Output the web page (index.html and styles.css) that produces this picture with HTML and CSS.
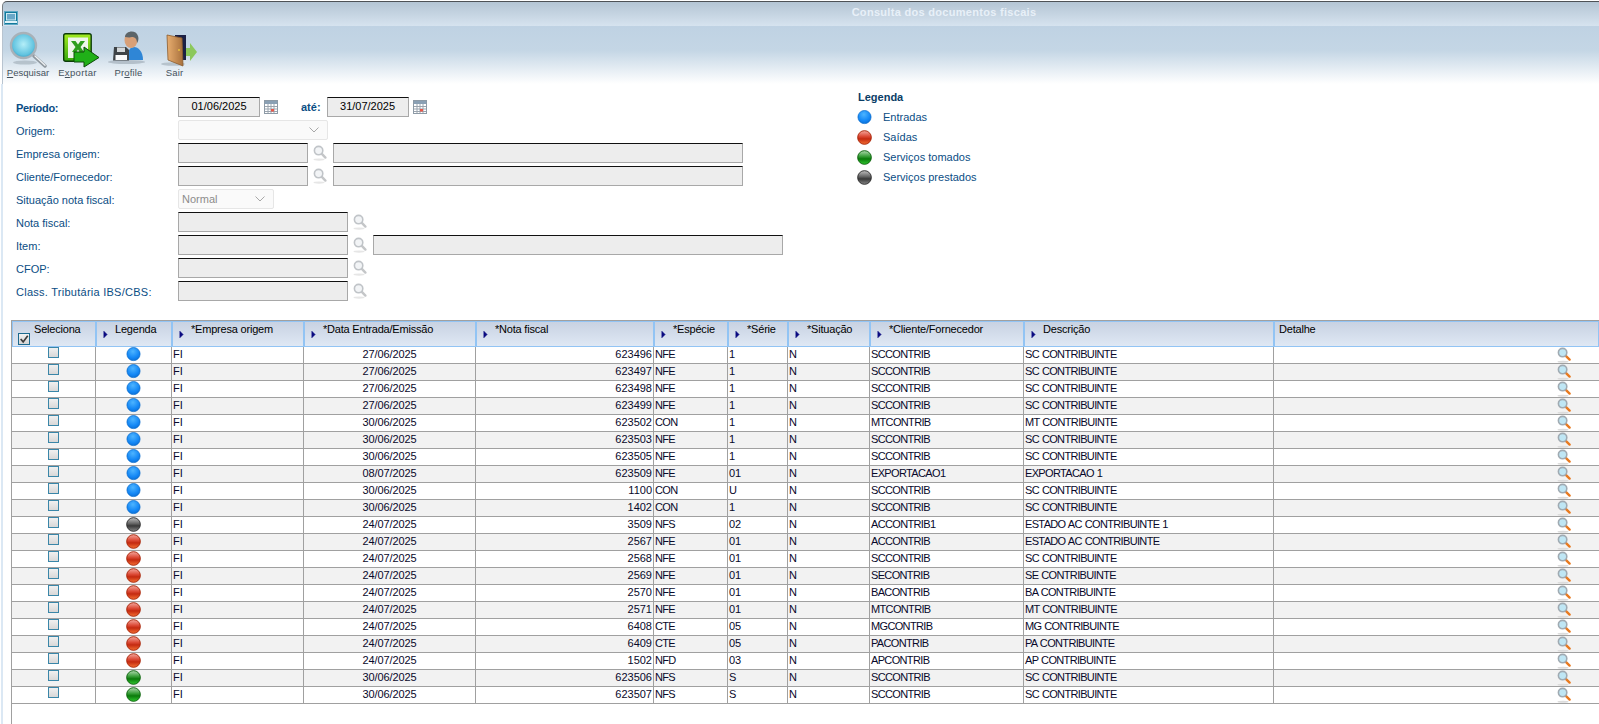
FILE: index.html
```html
<!DOCTYPE html>
<html lang="pt-BR">
<head>
<meta charset="utf-8">
<title>Consulta dos documentos fiscais</title>
<link rel="stylesheet" href="styles.css">
</head>
<body>
<svg class="defs" width="0" height="0" aria-hidden="true">
  <defs>
    <radialGradient id="gBlue" cx=".45" cy=".3" r=".8"><stop offset="0" stop-color="#4db4ff"/><stop offset=".6" stop-color="#1488f6"/><stop offset="1" stop-color="#0a68cc"/></radialGradient>
    <linearGradient id="gRed" x1="0" y1="0" x2="0" y2="1"><stop offset="0" stop-color="#f4a89e"/><stop offset=".42" stop-color="#dc4a36"/><stop offset=".6" stop-color="#c42a10"/><stop offset="1" stop-color="#f47034"/></linearGradient>
    <linearGradient id="gGreen" x1="0" y1="0" x2="0" y2="1"><stop offset="0" stop-color="#b0d8b0"/><stop offset=".42" stop-color="#389e38"/><stop offset=".6" stop-color="#0a7a0a"/><stop offset="1" stop-color="#30c830"/></linearGradient>
    <linearGradient id="gGray" x1="0" y1="0" x2="0" y2="1"><stop offset="0" stop-color="#c0c0c0"/><stop offset=".42" stop-color="#686868"/><stop offset=".6" stop-color="#383838"/><stop offset="1" stop-color="#888888"/></linearGradient>
    <symbol id="dotBlue" viewBox="0 0 16 16"><circle cx="8" cy="7.500" r="7" fill="url(#gBlue)" stroke="#0a6ccc" stroke-width=".8"/></symbol>
    <symbol id="dotRed" viewBox="0 0 16 16"><circle cx="8" cy="8" r="7.300" fill="url(#gRed)" stroke="#a82408" stroke-width="1"/></symbol>
    <symbol id="dotGreen" viewBox="0 0 16 16"><circle cx="8" cy="8" r="7.300" fill="url(#gGreen)" stroke="#0a620a" stroke-width="1"/></symbol>
    <symbol id="dotGray" viewBox="0 0 16 16"><circle cx="8" cy="8" r="7.300" fill="url(#gGray)" stroke="#2c2c2c" stroke-width="1"/></symbol>
    <symbol id="lupaGray" viewBox="0 0 14 16"><ellipse cx="6" cy="14.600" rx="5.500" ry="1.100" fill="#e6e6e6"/><path d="M8.600 8.600l3.800 4" stroke="#c4c6c8" stroke-width="2.400" stroke-linecap="round"/><circle cx="5.600" cy="5.600" r="4.200" fill="#f2f4f6" stroke="#c0c4c8" stroke-width="1.600"/></symbol>
    <symbol id="lupaOrange" viewBox="0 0 14 16"><ellipse cx="6" cy="14.800" rx="5.500" ry="1" fill="#dcdcdc"/><path d="M8.800 8.800l3.800 3.800" stroke="#e87a20" stroke-width="2.400" stroke-linecap="round"/><circle cx="5.600" cy="5.600" r="4.200" fill="#bfe6f4" stroke="#a0aab2" stroke-width="1.600"/></symbol>
    <symbol id="cal" viewBox="0 0 14 14"><rect x=".5" y=".5" width="13" height="13" fill="#fff" stroke="#8d9aa6"/><rect x="1" y="1" width="12" height="3" fill="#8aa0b4"/><path d="M1 6.500h12M1 9h12M1 11.500h12M4 4v9M7 4v9M10 4v9" stroke="#9aa4ae" stroke-width="1"/><rect x="7" y="9" width="3" height="2.500" fill="#e8584a"/></symbol>
    <symbol id="sort" viewBox="0 0 6 10"><path d="M1 1l4 4-4 4z" fill="#0a0a80" stroke="#0a0a80" stroke-width=".6"/></symbol>
  </defs>
</svg>
<div class="window">
  <header class="titlebar">
    <span class="appicon"><svg width="12" height="10" viewBox="0 0 12 10"><rect x="1.500" y=".5" width="9" height="6.500" fill="#6aa8c8" stroke="#cfeaf2"/><rect x="0" y="8" width="12" height="2" fill="#dff2f8"/></svg></span>
    <span class="wintitle">Consulta dos documentos fiscais</span>
  </header>
  <nav class="toolbar">
    <div class="tool tool-pesq">
      <svg width="44" height="38" viewBox="0 0 44 38"><defs><radialGradient id="lens" cx=".5" cy=".45" r=".6"><stop offset="0" stop-color="#b4eef8"/><stop offset=".7" stop-color="#62c4e0"/><stop offset="1" stop-color="#2f92ba"/></radialGradient></defs><ellipse cx="19" cy="32.500" rx="12" ry="2" fill="#a7b3bd" opacity=".7"/><path d="M28 26l11 10" stroke="#8f989f" stroke-width="3.400" stroke-linecap="round"/><path d="M29 26l10 9.300" stroke="#eef1f3" stroke-width="1.300" stroke-linecap="round"/><circle cx="17.500" cy="15.500" r="12.500" fill="url(#lens)" stroke="#a8b1b8" stroke-width="2.400"/></svg>
      <span class="toolname"><u>P</u>esquisar</span>
    </div>
    <div class="tool tool-exp">
      <svg width="55" height="38" viewBox="0 0 55 38"><defs><linearGradient id="xl" x1="0" y1="0" x2="0" y2="1"><stop offset="0" stop-color="#a4ec20"/><stop offset="1" stop-color="#36a80c"/></linearGradient></defs><rect x="13.700" y="3.700" width="27.500" height="27.500" rx="2" fill="url(#xl)" stroke="#0c3c08" stroke-width="1.400"/><rect x="18" y="7.500" width="20" height="20.500" fill="#eef6ea"/><path d="M21 11h4.500l2.500 3.500 2.500-3.500H35l-4.500 6 3.500 5h-4.500L28 19.500 26.500 22H22l3.500-5z" fill="#2e9e1c"/><path d="M34 17l15 10.500L34 37v-5H24V22h10z" fill="#20b018" stroke="#0c4a08" stroke-width="1"/></svg>
      <span class="toolname">E<u>x</u>portar</span>
    </div>
    <div class="tool tool-prof">
      <svg width="47" height="38" viewBox="0 0 47 38"><ellipse cx="21.500" cy="32" rx="18.500" ry="2" fill="#a7b3bd" opacity=".75"/><path d="M22 30c0-9 3-13 7-13s9 4 9 13z" fill="#2f86d6"/><ellipse cx="26" cy="10" rx="6.500" ry="8" fill="#d8a078"/><path d="M20 7c0-6 11-8 13-1 1 3 0 6-1 7 0-4-2-6-5-6-3 1-5 0-7 0z" fill="#5c6468"/><path d="M9 17h12l3 3v10.500H8z" fill="#3e4346"/><rect x="12" y="17.500" width="8" height="4.500" fill="#d4d8da"/><rect x="10.500" y="25" width="11.500" height="5" fill="#fafafa"/></svg>
      <span class="toolname">Pr<u>o</u>file</span>
    </div>
    <div class="tool tool-sair">
      <svg width="45" height="38" viewBox="0 0 45 38"><defs><linearGradient id="door" x1="0" y1="0" x2="1" y2="0"><stop offset="0" stop-color="#e8ae70"/><stop offset="1" stop-color="#a8703c"/></linearGradient></defs><ellipse cx="21" cy="34" rx="12" ry="1.800" fill="#a7b3bd" opacity=".7"/><rect x="23" y="5" width="11" height="25" fill="#1c2044"/><path d="M15 5l15 3 1 28-15-6z" fill="url(#door)" stroke="#8a5a2c" stroke-width=".8"/><circle cx="27" cy="20" r="1" fill="#e8c040"/><path d="M34 18h4v-5l7 9-7 9v-5h-4z" fill="#8cc85c"/></svg>
      <span class="toolname">Sair</span>
    </div>
  </nav>
  <main class="content">
    <section class="filters">
      <form class="form">
        <div class="row">
          <label class="lbl lbl-strong">Período:</label>
          <span class="field w-date">01/06/2025</span>
          <svg class="cal" width="14" height="14"><use href="#cal"/></svg>
          <label class="lbl-strong ate">até:</label>
          <span class="field w-date">31/07/2025</span>
          <svg class="cal" width="14" height="14"><use href="#cal"/></svg>
        </div>
        <div class="row">
          <label class="lbl">Origem:</label>
          <span class="select w-origem"><svg class="chev" width="10" height="6" viewBox="0 0 10 6"><path d="M.5.5L5 5 9.500.5" fill="none" stroke="#a8a8a8"/></svg></span>
        </div>
        <div class="row">
          <label class="lbl">Empresa origem:</label>
          <span class="field w-code"></span>
          <svg class="lupa" width="14" height="16"><use href="#lupaGray"/></svg>
          <span class="field w-desc"></span>
        </div>
        <div class="row">
          <label class="lbl">Cliente/Fornecedor:</label>
          <span class="field w-code"></span>
          <svg class="lupa" width="14" height="16"><use href="#lupaGray"/></svg>
          <span class="field w-desc"></span>
        </div>
        <div class="row">
          <label class="lbl">Situação nota fiscal:</label>
          <span class="select w-sit">Normal<svg class="chev" width="10" height="6" viewBox="0 0 10 6"><path d="M.5.5L5 5 9.500.5" fill="none" stroke="#a8a8a8"/></svg></span>
        </div>
        <div class="row">
          <label class="lbl">Nota fiscal:</label>
          <span class="field w-wide"></span>
          <svg class="lupa" width="14" height="16"><use href="#lupaGray"/></svg>
        </div>
        <div class="row">
          <label class="lbl">Item:</label>
          <span class="field w-wide"></span>
          <svg class="lupa" width="14" height="16"><use href="#lupaGray"/></svg>
          <span class="field w-desc"></span>
        </div>
        <div class="row">
          <label class="lbl">CFOP:</label>
          <span class="field w-wide"></span>
          <svg class="lupa" width="14" height="16"><use href="#lupaGray"/></svg>
        </div>
        <div class="row">
          <label class="lbl lbl-wide">Class. Tributária IBS/CBS:</label>
          <span class="field w-wide"></span>
          <svg class="lupa" width="14" height="16"><use href="#lupaGray"/></svg>
        </div>
      </form>
      <aside class="legend">
        <h2 class="legend-title">Legenda</h2>
        <div class="legend-item"><svg width="15" height="15"><use href="#dotBlue"/></svg>Entradas</div>
        <div class="legend-item"><svg width="15" height="15"><use href="#dotRed"/></svg>Saídas</div>
        <div class="legend-item"><svg width="15" height="15"><use href="#dotGreen"/></svg>Serviços tomados</div>
        <div class="legend-item"><svg width="15" height="15"><use href="#dotGray"/></svg>Serviços prestados</div>
      </aside>
    </section>
    <section class="gridwrap">
      <table class="grid" id="grid">
        <colgroup>
          <col class="c1"><col class="c2"><col class="c3"><col class="c4"><col class="c5"><col class="c6"><col class="c7"><col class="c8"><col class="c9"><col class="c10"><col>
        </colgroup>
        <thead>
          <tr>
            <th><span class="hcell hcell-check"><span class="hcheck"><svg width="10" height="10" viewBox="0 0 12 12"><path d="M2 6l3 3.500L10.500 2" fill="none" stroke="#3c3c3c" stroke-width="2"/></svg></span><span class="htext">Seleciona</span></span></th>
            <th><span class="hcell"><svg class="sort" width="5" height="9"><use href="#sort"/></svg><span class="htext">Legenda</span></span></th>
            <th><span class="hcell"><svg class="sort" width="5" height="9"><use href="#sort"/></svg><span class="htext">*Empresa origem</span></span></th>
            <th><span class="hcell"><svg class="sort" width="5" height="9"><use href="#sort"/></svg><span class="htext">*Data Entrada/Emissão</span></span></th>
            <th><span class="hcell"><svg class="sort" width="5" height="9"><use href="#sort"/></svg><span class="htext">*Nota fiscal</span></span></th>
            <th><span class="hcell"><svg class="sort" width="5" height="9"><use href="#sort"/></svg><span class="htext">*Espécie</span></span></th>
            <th><span class="hcell"><svg class="sort" width="5" height="9"><use href="#sort"/></svg><span class="htext">*Série</span></span></th>
            <th><span class="hcell"><svg class="sort" width="5" height="9"><use href="#sort"/></svg><span class="htext">*Situação</span></span></th>
            <th><span class="hcell"><svg class="sort" width="5" height="9"><use href="#sort"/></svg><span class="htext">*Cliente/Fornecedor</span></span></th>
            <th><span class="hcell"><svg class="sort" width="5" height="9"><use href="#sort"/></svg><span class="htext">Descrição</span></span></th>
            <th><span class="hcell hcell-plain"><span class="htext">Detalhe</span></span></th>
          </tr>
        </thead>
        <tbody id="rows"></tbody>
      </table>
    </section>
  </main>
</div>
<script src="app.js"></script>
</body>
</html>
```

FILE: styles.css
```css
* { box-sizing: border-box; }
html, body { margin: 0; height: 100%; overflow: hidden; background: #fff; }
body { font-family: "Liberation Sans", Arial, sans-serif; font-size: 11px; color: #000; }
.defs { position: absolute; }
.window {
  height: 723px;
  margin: 1px 0 0 1px;
  overflow: hidden;
  display: flex;
  flex-direction: column;
}
.titlebar {
  height: 25px;
  flex: none;
  margin-left: 1px;
  display: flex;
  align-items: flex-start;
  position: relative;
  padding: 9px 0 0 1px;
  border-top: 1px solid #4e5256;
  border-left: 1px solid #787e84;
  border-top-left-radius: 5px;
  background: linear-gradient(#b4c5d4, #d6e3ef);
}
.appicon {
  width: 14px;
  height: 14px;
  background: #127a9c;
  border: 1px solid #5fa8c4;
  display: flex;
  align-items: center;
  justify-content: center;
}
.wintitle {
  position: absolute;
  left: 751px;
  width: 380px;
  top: 4px;
  text-align: center;
  color: #e8f0f8;
  font-size: 11px;
  font-weight: bold;
  letter-spacing: .3px;
}
.toolbar {
  height: 58px;
  flex: none;
  margin-left: 1px;
  display: flex;
  align-items: flex-start;
  padding-left: 3px;
  border-left: 1px solid #b8c4d0;
  background: linear-gradient(#bfd2e3 0%, #c4d6e5 42%, #ffffff 100%);
}
.tool { display: flex; flex-direction: column; align-items: center; height: 58px; font-size: 9.500px; color: #46525c; }
.tool svg { display: block; margin-top: 4px; }
.toolname { letter-spacing: .15px; line-height: 10px; }
.tool-pesq { width: 44px; }
.tool-exp { width: 55px; }
.tool-exp .toolname { letter-spacing: .35px; }
.tool-pesq .toolname { letter-spacing: 0; }
.tool-prof { width: 47px; }
.tool-sair { width: 45px; }
.content { flex: 1; display: flex; flex-direction: column; min-height: 0; border-left: 2px solid #dbe8f4; }
.filters { display: flex; height: 236px; flex: none; padding-top: 6px; }
.form { width: 854px; padding: 7px 0 0 13px; display: flex; flex-direction: column; gap: 3px; }
.row { display: flex; align-items: center; height: 20px; flex: none; }
.lbl { width: 162px; flex: none; padding-top: 1px; color: #0a4d84; }
.lbl-wide { letter-spacing: .26px; }
.lbl-strong { font-weight: bold; color: #0a4d84; }
.lbl.lbl-strong { letter-spacing: -.3px; }
.ate { margin: 0 6px 0 23px; }
.field {
  display: block;
  height: 20px;
  background: #ededed;
  border: 1px solid #a8a8a8;
  border-top: 1px solid #111;
  line-height: 17px;
  text-align: center;
  font-size: 11px;
}
.w-date { width: 82px; }
.w-code { width: 130px; }
.w-wide { width: 170px; }
.w-desc { width: 410px; margin-left: 6px; }
.select {
  display: flex;
  align-items: center;
  justify-content: space-between;
  height: 20px;
  background: #fafafa;
  border: 1px solid #e6e6e6;
  border-radius: 2px;
  color: #8c8c8c;
  padding: 0 8px 0 3px;
}
.w-origem { width: 150px; justify-content: flex-end; }
.w-sit { width: 96px; }
.cal { margin-left: 4px; flex: none; }
.lupa { margin-left: 5px; flex: none; }
.legend-title { margin: 0 0 3px; height: 14px; line-height: 14px; font-size: 11px; font-weight: bold; color: #0a3d66; padding-left: 1px; }
.legend-item { display: flex; align-items: center; height: 20px; color: #0a4d84; }
.legend-item svg { margin-right: 11px; }
.gridwrap { flex: 1; margin-left: 8px; border-left: 1px solid #a0a0a0; border-top: 1px solid #a0a0a0; min-height: 0; }
.grid { border-collapse: separate; border-spacing: 0; table-layout: fixed; width: 1587px; }
.c1 { width: 84px; } .c2 { width: 76px; } .c3 { width: 132px; } .c4 { width: 172px; } .c5 { width: 178px; }
.c6 { width: 74px; } .c7 { width: 60px; } .c8 { width: 82px; } .c9 { width: 154px; } .c10 { width: 250px; }
.grid th {
  height: 26px;
  padding: 0;
  vertical-align: top;
  text-align: left;
  font-weight: normal;
  background: linear-gradient(#c8d2e2, #dfe8f4);
  border: 1px solid #92c4f4;
}
.hcell { display: flex; height: 24px; padding-left: 6px; letter-spacing: -.2px; }
.hcell-check { padding-left: 5px; }
.hcell-plain { padding-left: 4px; }
.htext { line-height: 14px; margin-left: 7px; }
.hcell-plain .htext { margin-left: 0; }
.hcheck + .htext { margin-left: 4px; }
.sort { margin-top: 8px; flex: none; }
.hcheck { width: 12px; height: 12px; margin-top: 11px; flex: none; background: linear-gradient(#f2f2f2, #d4d4d4); border: 1px solid #1c6a8e; display: flex; }
.grid td {
  height: 17px;
  padding: 0 1px;
  line-height: 15px;
  vertical-align: top;
  border-right: 1px solid #a0a0a0;
  border-bottom: 1px solid #a0a0a0;
  white-space: nowrap;
  overflow: hidden;
  color: #08082a;
}
.grid tr:nth-child(even) td { background: #f2f2f2; }
.grid td:last-child { border-right: 0; }
.ctr { text-align: center; letter-spacing: -.1px; }
.num { text-align: right; }
.up { letter-spacing: -.65px; word-spacing: .5px; }
.cb { display: block; width: 11px; height: 11px; margin-left: 35px; background: linear-gradient(#f0f0f0, #d8d8d8); border: 1px solid #3a86a8; }
.grid td.dot { padding: 0; }
.dot svg { display: block; margin: 0 auto; }
.grid td.det { padding: 0; }
.det svg { display: block; margin-left: 283px; }
```

FILE: app.js
```js
var data = [
["b","27/06/2025","623496","NFE","1","SCCONTRIB","SC CONTRIBUINTE"],
["b","27/06/2025","623497","NFE","1","SCCONTRIB","SC CONTRIBUINTE"],
["b","27/06/2025","623498","NFE","1","SCCONTRIB","SC CONTRIBUINTE"],
["b","27/06/2025","623499","NFE","1","SCCONTRIB","SC CONTRIBUINTE"],
["b","30/06/2025","623502","CON","1","MTCONTRIB","MT CONTRIBUINTE"],
["b","30/06/2025","623503","NFE","1","SCCONTRIB","SC CONTRIBUINTE"],
["b","30/06/2025","623505","NFE","1","SCCONTRIB","SC CONTRIBUINTE"],
["b","08/07/2025","623509","NFE","01","EXPORTACAO1","EXPORTACAO 1"],
["b","30/06/2025","1100","CON","U","SCCONTRIB","SC CONTRIBUINTE"],
["b","30/06/2025","1402","CON","1","SCCONTRIB","SC CONTRIBUINTE"],
["k","24/07/2025","3509","NFS","02","ACCONTRIB1","ESTADO AC CONTRIBUINTE 1"],
["r","24/07/2025","2567","NFE","01","ACCONTRIB","ESTADO AC CONTRIBUINTE"],
["r","24/07/2025","2568","NFE","01","SCCONTRIB","SC CONTRIBUINTE"],
["r","24/07/2025","2569","NFE","01","SECONTRIB","SE CONTRIBUINTE"],
["r","24/07/2025","2570","NFE","01","BACONTRIB","BA CONTRIBUINTE"],
["r","24/07/2025","2571","NFE","01","MTCONTRIB","MT CONTRIBUINTE"],
["r","24/07/2025","6408","CTE","05","MGCONTRIB","MG CONTRIBUINTE"],
["r","24/07/2025","6409","CTE","05","PACONTRIB","PA CONTRIBUINTE"],
["r","24/07/2025","1502","NFD","03","APCONTRIB","AP CONTRIBUINTE"],
["g","30/06/2025","623506","NFS","S","SCCONTRIB","SC CONTRIBUINTE"],
["g","30/06/2025","623507","NFS","S","SCCONTRIB","SC CONTRIBUINTE"]
];
var dots = { b: "dotBlue", r: "dotRed", g: "dotGreen", k: "dotGray" };
var html = "";
data.forEach(function (r) {
  html += "<tr>" +
    '<td><span class="cb"></span></td>' +
    '<td class="dot"><svg width="15" height="15"><use href="#' + dots[r[0]] + '"/></svg></td>' +
    "<td>FI</td>" +
    '<td class="ctr">' + r[1] + "</td>" +
    '<td class="num">' + r[2] + "</td>" +
    '<td class="up">' + r[3] + "</td>" +
    "<td>" + r[4] + "</td>" +
    "<td>N</td>" +
    '<td class="up">' + r[5] + "</td>" +
    '<td class="up">' + r[6] + "</td>" +
    '<td class="det"><svg width="14" height="16"><use href="#lupaOrange"/></svg></td>' +
    "</tr>";
});
document.getElementById("rows").innerHTML = html;
```
